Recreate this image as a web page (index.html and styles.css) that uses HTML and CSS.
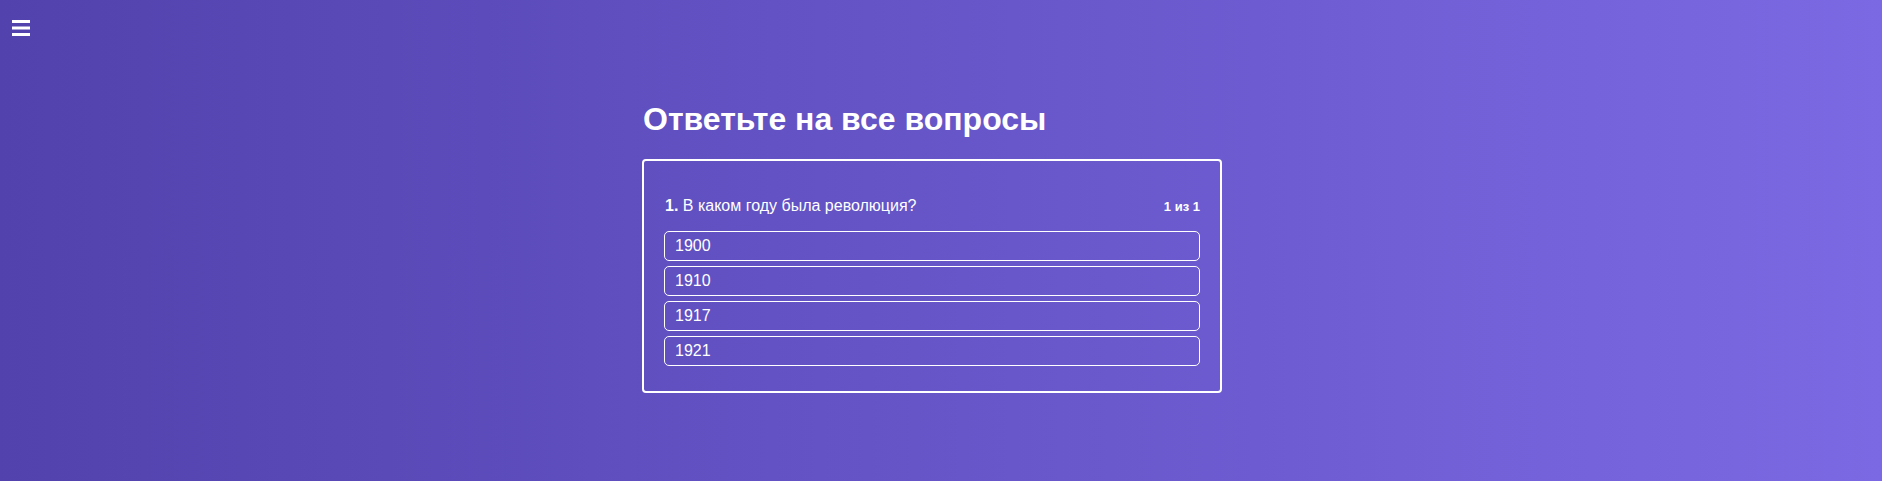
FILE: index.html
```html
<!DOCTYPE html>
<html lang="ru">
<head>
<meta charset="utf-8">
<title>Опрос</title>
<link rel="stylesheet" href="styles.css">
</head>
<body>
<div class="page">
  <button class="menu-btn" aria-label="Меню">
    <svg width="18" height="16" viewBox="0 0 18 16"><rect x="0" y="0" width="18" height="3" fill="#fff"/><rect x="0" y="6.5" width="18" height="3" fill="#fff"/><rect x="0" y="13" width="18" height="3" fill="#fff"/></svg>
  </button>
  <main class="main">
    <section class="quiz">
      <h1 class="quiz-title">Ответьте на все вопросы</h1>
      <div class="card">
        <div class="question-head">
          <div class="question-text"><b>1.</b> В каком году была революция?</div>
          <div class="question-count">1 из 1</div>
        </div>
        <ul class="options">
          <li class="option">1900</li>
          <li class="option">1910</li>
          <li class="option">1917</li>
          <li class="option">1921</li>
        </ul>
      </div>
    </section>
  </main>
</div>
</body>
</html>
```

FILE: styles.css
```css
html, body {
  margin: 0;
  padding: 0;
}
body {
  font-family: "Liberation Sans", Arial, sans-serif;
  color: #fff;
  background: linear-gradient(to right, #5142ad, #7b69e3);
  min-height: 481px;
}
.page {
  position: relative;
  min-height: 481px;
}
.menu-btn {
  position: absolute;
  left: 12px;
  top: 20px;
  padding: 0;
  border: 0;
  background: none;
  line-height: 0;
  cursor: pointer;
}
.main {
  display: flex;
  justify-content: center;
  padding: 101px 18px 0 0;
}
.quiz {
  width: 580px;
}
.quiz-title {
  margin: 0 0 21px 1px;
  font-size: 32px;
  line-height: 37px;
  font-weight: bold;
}
.card {
  border: 2px solid #fff;
  border-radius: 4px;
  padding: 20px 20px 25px;
}
.question-head {
  display: flex;
  justify-content: space-between;
  align-items: center;
  margin-top: 13px;
  height: 24px;
  margin-bottom: 13px;
}
.question-text {
  font-size: 16px;
  padding-left: 1px;
}
.question-count {
  font-size: 13px;
  font-weight: bold;
}
.options {
  list-style: none;
  margin: 0;
  padding: 0;
  display: flex;
  flex-direction: column;
  gap: 5px;
}
.option {
  border: 1px solid #fff;
  border-radius: 5px;
  height: 28px;
  line-height: 28px;
  padding: 0 10px;
  font-size: 16px;
}
```
